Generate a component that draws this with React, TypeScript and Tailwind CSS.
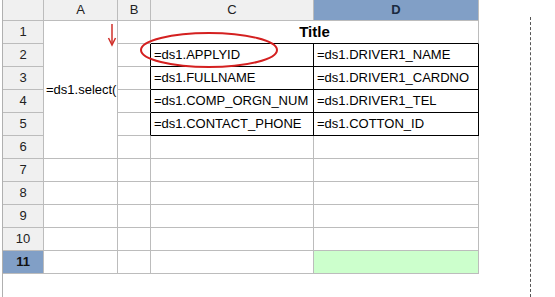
export default function App() {
    const rows = [1, 2, 3, 4, 5, 6, 7, 8, 9, 10, 11];
    const cData: Record<number, [string, string]> = {
        2: ["=ds1.APPLYID", "=ds1.DRIVER1_NAME"],
        3: ["=ds1.FULLNAME", "=ds1.DRIVER1_CARDNO"],
        4: ["=ds1.COMP_ORGN_NUM", "=ds1.DRIVER1_TEL"],
        5: ["=ds1.CONTACT_PHONE", "=ds1.COTTON_ID"],
    };

    const rowHead = "flex items-center justify-center border-r border-b border-[#bcbcbc] bg-[#f0f0f0] text-[#222]";
    const cell = "border-r border-b border-[#bcbcbc]";

    return (
        <div
            className="relative w-[555px] h-[297px] overflow-hidden bg-white pl-[2px] text-[13px]"
            style={{ fontFamily: '"Liberation Sans", Arial, sans-serif' }}
        >
            <div className="h-full border-l border-[#b0b0b0]">
                <div className="grid grid-cols-[41px_74px_33px_163px_165px] grid-rows-[21px_repeat(11,23px)]">
                    {/* column headers */}
                    <div className={rowHead}></div>
                    <div className={rowHead}>A</div>
                    <div className={rowHead}>B</div>
                    <div className={rowHead}>C</div>
                    <div className="flex items-center justify-center border-r border-b border-[#bcbcbc] bg-[#819fc6] font-bold text-[#1a2a40]">
                        D
                    </div>

                    {rows.map((r) => {
                        const selected = r === 11;
                        return [
                            <div
                                key={`h${r}`}
                                className={
                                    selected
                                        ? "flex items-center justify-center border-r border-b border-[#bcbcbc] bg-[#819fc6] font-bold text-[#111]"
                                        : rowHead
                                }
                            >
                                {r}
                            </div>,
                            r === 1 ? (
                                <div key="a1" className={`${cell} row-span-6 flex items-center pl-[2px] whitespace-nowrap`}>
                                    =ds1.select(
                                </div>
                            ) : r > 6 ? (
                                <div key={`a${r}`} className={cell}></div>
                            ) : null,
                            <div
                                key={`b${r}`}
                                className={
                                    r >= 2 && r <= 5
                                        ? "border-b border-[#bcbcbc] border-r border-r-black"
                                        : cell
                                }
                            ></div>,
                            r === 1 ? (
                                <div
                                    key="c1"
                                    className="col-span-2 flex items-center justify-center border-r border-[#bcbcbc] border-b border-b-black text-[15px] font-bold"
                                >
                                    Title
                                </div>
                            ) : cData[r] ? (
                                [
                                    <div key={`c${r}`} className="flex items-center border-r border-b border-black pl-[3px] whitespace-nowrap overflow-hidden">
                                        {cData[r][0]}
                                    </div>,
                                    <div key={`d${r}`} className="flex items-center border-r border-b border-black pl-[3px] whitespace-nowrap overflow-hidden">
                                        {cData[r][1]}
                                    </div>,
                                ]
                            ) : (
                                [
                                    <div key={`c${r}`} className={cell}></div>,
                                    <div key={`d${r}`} className={selected ? `${cell} bg-[#ccffcc]` : cell}></div>,
                                ]
                            ),
                        ];
                    })}
                </div>
            </div>

            {/* page break */}
            <div className="absolute left-[530px] top-[17px] bottom-0 border-l border-dashed border-[#555]"></div>

            {/* annotation: arrow */}
            <svg className="absolute left-[106px] top-[22px]" width="12" height="26" viewBox="0 0 12 26">
                <line x1="6" y1="2" x2="6" y2="22" stroke="#d0302a" strokeWidth="1.5" />
                <path d="M2.5 16 L6 23 L9.5 16" fill="none" stroke="#d0302a" strokeWidth="1.5" />
            </svg>

            {/* annotation: ellipse */}
            <svg className="absolute left-[138px] top-[30px]" width="146" height="42" viewBox="0 0 146 42">
                <ellipse cx="71" cy="20" rx="68" ry="17" fill="none" stroke="#d42020" strokeWidth="2" />
            </svg>
        </div>
    );
}
